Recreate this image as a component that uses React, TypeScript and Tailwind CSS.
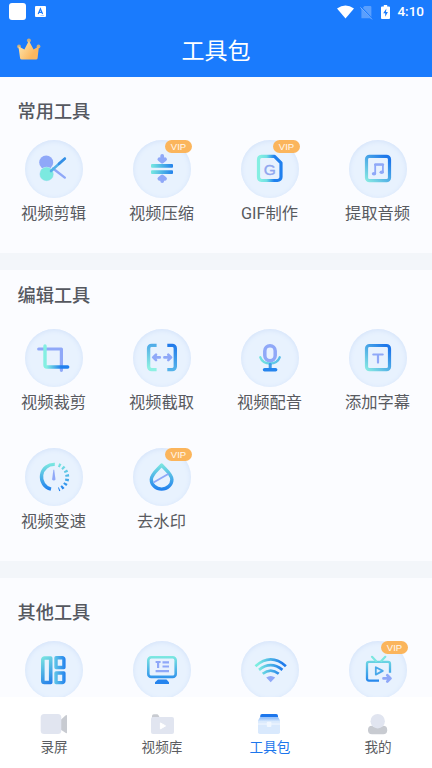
import type { ReactNode } from 'react';

interface Tool {
  name: string;
  icon: ReactNode;
  vip?: boolean;
}

interface NavItem {
  name: string;
  icon: ReactNode;
  active?: boolean;
}

const PURPLE = '#8fa8f8';

// Shared gradients, in the coordinates of a 58x58 tool icon
function Gradients() {
  return (
    <svg width="0" height="0" className="absolute" aria-hidden="true">
      <defs>
        <linearGradient id="diag" gradientUnits="userSpaceOnUse" x1="16" y1="42" x2="40" y2="15">
          <stop offset="0" stopColor="#8df0e2" />
          <stop offset="0.9" stopColor="#1f78ea" />
        </linearGradient>
        <linearGradient id="across" gradientUnits="userSpaceOnUse" x1="17" y1="0" x2="41" y2="0">
          <stop offset="0" stopColor="#7ceee0" />
          <stop offset="1" stopColor="#1f7cec" />
        </linearGradient>
        <linearGradient id="down" gradientUnits="userSpaceOnUse" x1="0" y1="15" x2="0" y2="42">
          <stop offset="0" stopColor="#7eeae0" />
          <stop offset="1" stopColor="#2080ee" />
        </linearGradient>
        <linearGradient id="gif" gradientUnits="userSpaceOnUse" x1="19" y1="0" x2="38" y2="0">
          <stop offset="0" stopColor="#84efe2" />
          <stop offset="0.35" stopColor="#6fdfe4" />
          <stop offset="0.75" stopColor="#2080ee" />
        </linearGradient>
        <linearGradient id="fall" gradientUnits="userSpaceOnUse" x1="14" y1="16" x2="30" y2="42">
          <stop offset="0" stopColor="#7eeae0" />
          <stop offset="1" stopColor="#1f78ea" />
        </linearGradient>
      </defs>
    </svg>
  );
}

function ToolSvg({ children }: { children: ReactNode }) {
  return (
    <svg viewBox="0 0 58 58" className="block size-full" fill="none" strokeLinecap="round" strokeLinejoin="round">
      {children}
    </svg>
  );
}

const cutIcon = (
  <ToolSvg>
    <path d="M28 28.5 39.8 37.6" stroke={PURPLE} strokeWidth="2.4" />
    <circle cx="21.2" cy="22.4" r="7" fill={PURPLE} />
    <circle cx="21.6" cy="34" r="7.2" fill="#c3e0f8" />
    <circle cx="21.6" cy="34" r="6.7" fill="#7ce9e0" />
    <path d="M26 31 39.8 18.6" stroke="#52b0e8" strokeWidth="2.6" />
    <path d="M34 23.8 39.8 18.6" stroke="#368fe6" strokeWidth="2.6" />
  </ToolSvg>
);

const compressIcon = (
  <ToolSvg>
    <path d="M29.2 16V21M26.4 19.2l2.8 2.4 2.8-2.4M29.2 41V37M26.4 38.8l2.8-2.4 2.8 2.4" stroke={PURPLE} strokeWidth="3.8" />
    <rect x="18" y="24.1" width="22" height="3.7" rx="1" fill="url(#across)" />
    <rect x="18" y="30.2" width="22" height="3.7" rx="1" fill="url(#across)" />
  </ToolSvg>
);

const gifIcon = (
  <ToolSvg>
    <path d="M20.5 16.4H33.5L40 22.9V37a3.5 3.5 0 0 1-3.5 3.5h-16A3.5 3.5 0 0 1 17.5 37V19.9a3.5 3.5 0 0 1 3-3.5Z" stroke="url(#gif)" strokeWidth="3.2" />
    <text x="28.9" y="35.4" textAnchor="middle" className="font-['Liberation_Sans'] text-[15.5px]" fill="#90a7ef" stroke="#90a7ef" strokeWidth="0.4">G</text>
  </ToolSvg>
);

const audioIcon = (
  <ToolSvg>
    <rect x="17.5" y="16.3" width="23" height="24.4" rx="3" stroke="url(#diag)" strokeWidth="3.2" />
    <path d="M26.2 33.5V24.4H33.9V32" stroke={PURPLE} strokeWidth="1.8" />
    <path d="M26.2 24.6H33.9" stroke={PURPLE} strokeWidth="2.4" />
    <ellipse cx="25" cy="33.7" rx="2.2" ry="1.8" fill={PURPLE} />
    <ellipse cx="32.7" cy="32.3" rx="2.2" ry="1.8" fill={PURPLE} />
  </ToolSvg>
);

const cropIcon = (
  <ToolSvg>
    <path d="M13.7 20H36.4V41.3" stroke={PURPLE} strokeWidth="3.2" />
    <path d="M20 17V36a2 2 0 0 0 2 2H42.7" stroke="url(#cropLine)" strokeWidth="3.4" />
    <defs>
      <linearGradient id="cropLine" gradientUnits="userSpaceOnUse" x1="20" y1="0" x2="36" y2="0">
        <stop offset="0.1" stopColor="#84efe2" />
        <stop offset="1" stopColor="#2080ee" />
      </linearGradient>
    </defs>
  </ToolSvg>
);

const captureIcon = (
  <ToolSvg>
    <path d="M23.6 16.4H18.6a3 3 0 0 0-3 3V37.6a3 3 0 0 0 3 3H23.6" stroke="url(#bracketL)" strokeWidth="3.4" strokeLinecap="butt" />
    <path d="M34.3 16.4H39.3a3 3 0 0 1 3 3V37.6a3 3 0 0 1-3 3H34.3" stroke="url(#bracketR)" strokeWidth="3.4" strokeLinecap="butt" />
    <path d="M26.8 28.4H20.5M23 25.7l-2.8 2.7 2.8 2.7M31.4 28.4H37.7M35.3 25.7l2.8 2.7-2.8 2.7" stroke={PURPLE} strokeWidth="2.6" />
    <defs>
      <linearGradient id="bracketL" gradientUnits="userSpaceOnUse" x1="0" y1="15" x2="0" y2="41">
        <stop offset="0" stopColor="#4faae8" />
        <stop offset="0.9" stopColor="#8df0e2" />
      </linearGradient>
      <linearGradient id="bracketR" gradientUnits="userSpaceOnUse" x1="0" y1="15" x2="0" y2="41">
        <stop offset="0" stopColor="#1f78ea" />
        <stop offset="1" stopColor="#54b3ea" />
      </linearGradient>
    </defs>
  </ToolSvg>
);

const micIcon = (
  <ToolSvg>
    <rect x="23.8" y="16.7" width="10.4" height="15" rx="5.2" stroke={PURPLE} strokeWidth="3.5" />
    <path d="M19.3 28.3A10.2 8.8 0 0 0 38.7 28.3" stroke="url(#micArc)" strokeWidth="2.4" />
    <path d="M29.2 35.2V39" stroke="#3f9de9" strokeWidth="3" />
    <path d="M23.6 40.8H34.6" stroke="#2584ee" strokeWidth="3.6" />
    <defs>
      <linearGradient id="micArc" gradientUnits="userSpaceOnUse" x1="19" y1="0" x2="39" y2="0">
        <stop offset="0" stopColor="#74e4e0" />
        <stop offset="1" stopColor="#58bce9" />
      </linearGradient>
    </defs>
  </ToolSvg>
);

const subtitleIcon = (
  <ToolSvg>
    <rect x="17.5" y="16.5" width="23" height="24.2" rx="3" stroke="url(#diag)" strokeWidth="3.2" />
    <path d="M24.3 25.5H33.7M29 25.5V33.6" stroke={PURPLE} strokeWidth="2.2" />
  </ToolSvg>
);

const speedIcon = (
  <ToolSvg>
    <path d="M29.8 16.4A12.6 12.6 0 0 0 26 41.2" stroke="url(#down)" strokeWidth="3.4" strokeLinecap="butt" />
    <path d="M33.6 17A12.9 12.9 0 0 1 33.6 41.4" stroke="url(#down)" strokeWidth="3.8" strokeDasharray="2.2 2.2" strokeLinecap="butt" />
    <path d="M28.4 21.8H29.2L30.5 31.4A1.8 1.6 0 0 1 27.1 31.4Z" fill={PURPLE} />
  </ToolSvg>
);

const dropIcon = (
  <ToolSvg>
    <path d="M28.6 17C26 20.5 18.3 25.8 18.3 31.5A10.3 9.6 0 0 0 38.9 31.5C38.9 25.8 31.2 20.5 28.6 17Z" stroke="url(#down)" strokeWidth="3.4" />
    <path d="M21.3 34 34.8 26.2" stroke={PURPLE} strokeWidth="1.9" />
  </ToolSvg>
);

const layoutIcon = (
  <ToolSvg>
    <path d="M25.7 17H19.5a1.7 1.7 0 0 0-1.7 1.7V39.8a1.7 1.7 0 0 0 1.7 1.7H25.7Z" stroke="url(#fall)" strokeWidth="3.6" />
    <path d="M31 16.8H37.3a1.6 1.6 0 0 1 1.6 1.6V26.5H31Z" stroke="url(#cell)" strokeWidth="3.4" />
    <path d="M31 32H38.9V40a1.6 1.6 0 0 1-1.6 1.6H31Z" stroke="url(#cell)" strokeWidth="3.4" />
    <defs>
      <linearGradient id="cell" gradientUnits="userSpaceOnUse" x1="28" y1="0" x2="40" y2="0">
        <stop offset="0" stopColor="#68cfe6" />
        <stop offset="1" stopColor="#2584ee" />
      </linearGradient>
    </defs>
  </ToolSvg>
);

const monitorIcon = (
  <ToolSvg>
    <rect x="15.3" y="16.3" width="27.4" height="19.6" rx="3" stroke="url(#down)" strokeWidth="2.6" />
    <path d="M25 38.5H33.5L36 41.2V43H22V41.2Z" fill="#2584ee" />
    <path d="M22.6 21H27.6M25.1 21V27M29.5 21.4H36M29.5 25.5H36M22.6 30.2H36" stroke={PURPLE} strokeWidth="2.2" strokeLinecap="butt" />
  </ToolSvg>
);

const wifiIcon = (
  <ToolSvg>
    <g stroke="url(#across)" strokeWidth="2.7" strokeLinecap="butt">
      <path d="M14.5 25.2Q29.7 11.6 44.9 25.2" />
      <path d="M18 28.9Q29.7 19.4 41.4 28.9" />
      <path d="M21.7 32.8Q29.7 26.4 37.7 32.8" />
    </g>
    <path d="M25.2 36.4Q29.7 33.4 34.2 36.4L29.7 41.2Z" fill={PURPLE} />
  </ToolSvg>
);

const castIcon = (
  <ToolSvg>
    <path d="M30 39.6H20a2 2 0 0 1-2-2V22.8a2 2 0 0 1 2-2H39a2 2 0 0 1 2 2V31.8" stroke="url(#down)" strokeWidth="2.3" strokeLinecap="butt" />
    <path d="M23 15.8 27 20M36.3 15.8 32.3 20" stroke="#7ce6e0" strokeWidth="2.2" />
    <path d="M26.8 26.2V33.6L33.8 29.9Z" stroke="#4aa9ea" strokeWidth="1.8" />
    <path d="M34.5 37.4H41M38.3 34.3l3.2 3.1-3.2 3.1" stroke={PURPLE} strokeWidth="2.7" />
  </ToolSvg>
);

const commonTools: Tool[] = [
  { name: '视频剪辑', icon: cutIcon },
  { name: '视频压缩', icon: compressIcon, vip: true },
  { name: 'GIF制作', icon: gifIcon, vip: true },
  { name: '提取音频', icon: audioIcon },
];

const editTools: Tool[] = [
  { name: '视频裁剪', icon: cropIcon },
  { name: '视频截取', icon: captureIcon },
  { name: '视频配音', icon: micIcon },
  { name: '添加字幕', icon: subtitleIcon },
  { name: '视频变速', icon: speedIcon },
  { name: '去水印', icon: dropIcon, vip: true },
];

// The labels of this row are scrolled under the bottom bar
const otherTools: Tool[] = [
  { name: '', icon: layoutIcon },
  { name: '', icon: monitorIcon },
  { name: '', icon: wifiIcon },
  { name: '', icon: castIcon, vip: true },
];

const navItems: NavItem[] = [
  {
    name: '录屏',
    icon: (
      <svg viewBox="0 0 28 21" className="h-[21px] w-7">
        <path d="M20.5 6 25.8 1.2Q27 .6 27 1.8V18.4Q27 19.6 25.8 19L20.5 15.5Z" fill="#c8cbd1" />
        <rect x="0.7" y="0" width="20.6" height="20" rx="3.5" fill="#e1e5f0" />
      </svg>
    ),
  },
  {
    name: '视频库',
    icon: (
      <svg viewBox="0 0 28 21" className="h-[21px] w-7">
        <path d="M4 6V2Q4 .2 5.8 .2H9Q10 .2 10.5 1.2L12 4V6Z" fill="#c8cbd1" />
        <rect x="3" y="3.1" width="23" height="16.9" rx="2" fill="#e1e5f0" />
        <path d="M12.4 8.9 17.6 11.9 12.4 14.9Z" fill="#fff" stroke="#fff" strokeLinejoin="round" />
      </svg>
    ),
  },
  {
    name: '工具包',
    active: true,
    icon: (
      <svg viewBox="0 0 28 21" className="h-[21px] w-7">
        <defs>
          <linearGradient id="lid" x1="0" y1="0" x2="0" y2="1">
            <stop offset="0" stopColor="#86b9fa" />
            <stop offset="0.7" stopColor="#dcebfd" />
          </linearGradient>
        </defs>
        <path d="M4.2 3.2V2Q4.2 0 6 0H20.2Q22 0 22 2V3.2Z" fill="#1c76ec" />
        <path d="M4 3.2H22.2L24 6.5V9.5H2V6.5Z" fill="url(#lid)" />
        <path d="M2 9.5H24V18.2Q24 20 22.2 20H3.8Q2 20 2 18.2Z" fill="#d9e9fd" />
        <path d="M2 9.6H24V10.8H2Z" fill="#eaf3fe" />
        <rect x="10.8" y="7.8" width="4.6" height="5.2" rx="1" fill="#f1f7ff" />
      </svg>
    ),
  },
  {
    name: '我的',
    icon: (
      <svg viewBox="0 0 28 21" className="h-[21px] w-7">
        <rect x="4" y="11.8" width="19.2" height="8.4" rx="4" fill="#c8cbd1" />
        <circle cx="13.7" cy="7.2" r="7.2" fill="#e1e5f0" />
      </svg>
    ),
  },
];

function StatusBar() {
  return (
    <div className="flex h-6 items-center justify-between pl-[9px] pr-2">
      <div className="flex items-center gap-[9px]">
        <div className="mb-px size-[17px] rounded-[3px] bg-white" />
        <svg viewBox="0 0 11 11" className="mb-px size-[11px]">
          <rect width="11" height="11" rx="1" fill="#fff" />
          <path d="M3.2 8 5.4 2.8 7.6 8M4 6.3H6.8" fill="none" stroke="#1a7bfd" strokeWidth="1.2" />
          <path d="M5.5 9.5H9" stroke="#9cc6fe" strokeWidth="0.7" />
        </svg>
      </div>
      <div className="flex items-center">
        <svg viewBox="0 0 17 14" className="mr-1.5 h-3.5 w-[17px]">
          <path d="M0 3.6Q8.5-2.8 17 3.6L8.5 13.6Z" fill="#fff" />
        </svg>
        <svg viewBox="0 0 13 15" className="mr-2 h-[15px] w-[13px]">
          <path d="M4.5 1H10.3Q11.4 1 11.4 2.1V13.2H1.4V4.2Z" fill="#5a9ffd" />
          <path d="M.6 1.8 12.2 14" stroke="#1a7bfd" strokeWidth="1.6" />
          <path d="M.4 2.4 12 14.4" stroke="#7db3fe" strokeWidth="1" />
        </svg>
        <svg viewBox="0 0 9 14" className="mr-[7px] mb-px h-3.5 w-[9px]">
          <path d="M2.8 0H6.2V1.4H8Q9 1.4 9 2.4V13Q9 14 8 14H1Q0 14 0 13V2.4Q0 1.4 1 1.4H2.8Z" fill="#fff" />
          <path d="M5.4 3.6 2.2 8.2H4.2V11.8L6.9 7H5Z" fill="#1a7bfd" />
        </svg>
        <span className="font-[Roboto] text-[13.5px] leading-none font-medium text-white">4:10</span>
      </div>
    </div>
  );
}

function Header() {
  return (
    <header className="h-[77px] shrink-0 bg-[#1a7bfd]">
      <StatusBar />
      <div className="grid h-[52px] grid-cols-[1fr_auto_1fr] items-center">
        <svg viewBox="0 0 24 23" className="mb-0.5 ml-[17px] h-[23px] w-6">
          <defs>
            <linearGradient id="crown" x1="0" y1="0" x2="1" y2="0.6">
              <stop offset="0.3" stopColor="#fcd897" />
              <stop offset="0.85" stopColor="#fbb75f" />
            </linearGradient>
          </defs>
          <circle cx="2" cy="8.5" r="1.9" fill="#c8ad80" />
          <circle cx="11.9" cy="2.6" r="2" fill="#c8ad80" />
          <circle cx="21.5" cy="8.4" r="1.9" fill="#c8ad80" />
          <path d="M1.4 8.3 7.4 11.4 11.9 2.8 16.6 11.4 21.9 8.3 20.6 20.2Q20.4 21.6 19 21.6H4.8Q3.4 21.6 3.1 20.2Z" fill="url(#crown)" />
        </svg>
        <h1 className="pt-0.5 text-[23px] leading-none text-white">工具包</h1>
      </div>
    </header>
  );
}

function ToolItem({ tool }: { tool: Tool }) {
  return (
    <div className="flex flex-col items-center">
      <div className="relative size-[58px] rounded-full bg-[#e8f2fe] shadow-[inset_0_1px_5px_#d3e2fa]">
        {tool.icon}
        {tool.vip && (
          <span className="absolute top-0 left-8 flex h-[13px] w-[27px] items-center justify-center rounded-full bg-[#fbb55c] pt-px font-['Liberation_Sans'] text-[9.5px] leading-none text-white/90">
            VIP
          </span>
        )}
      </div>
      <span className="mt-1 mr-px h-6 text-[16.3px] leading-6 text-[#585a60]">{tool.name}</span>
    </div>
  );
}

interface ToolSectionProps {
  title: string;
  tools: Tool[];
  className: string;
  gridClassName: string;
}

function ToolSection({ title, tools, className, gridClassName }: ToolSectionProps) {
  return (
    <section className={`shrink-0 bg-[#fbfcff] ${className}`}>
      <h2 className="pl-[17.5px] text-[18.2px] leading-6 font-medium text-[#55585f]">{title}</h2>
      <div className={`grid grid-cols-4 gap-y-[33px] ${gridClassName}`}>
        {tools.map((tool, i) => (
          <ToolItem key={i} tool={tool} />
        ))}
      </div>
    </section>
  );
}

function BottomNav() {
  return (
    <nav className="grid h-[71px] shrink-0 grid-cols-4 bg-white pt-[17px]">
      {navItems.map((item) => (
        <div key={item.name} className="flex flex-col items-center">
          {item.icon}
          <span className={`mt-0.5 text-[13.6px] leading-5 ${item.active ? 'text-[#1c76ec]' : 'text-[#5b5d61]'}`}>
            {item.name}
          </span>
        </div>
      ))}
    </nav>
  );
}

export default function App() {
  return (
    <div className="flex h-screen w-full flex-col overflow-hidden bg-[#f3f6fa] font-[Roboto,'Noto_Sans_CJK_SC',sans-serif]">
      <Gradients />
      <Header />
      <main className="flex min-h-0 flex-1 flex-col gap-[17px] overflow-hidden">
        <ToolSection title="常用工具" tools={commonTools} className="h-44 pt-[23px]" gridClassName="mt-4" />
        <ToolSection title="编辑工具" tools={editTools} className="h-[291px] pt-[14px]" gridClassName="mt-[21px]" />
        <ToolSection title="其他工具" tools={otherTools} className="h-[160px] pt-[23px]" gridClassName="mt-4" />
      </main>
      <BottomNav />
    </div>
  );
}
